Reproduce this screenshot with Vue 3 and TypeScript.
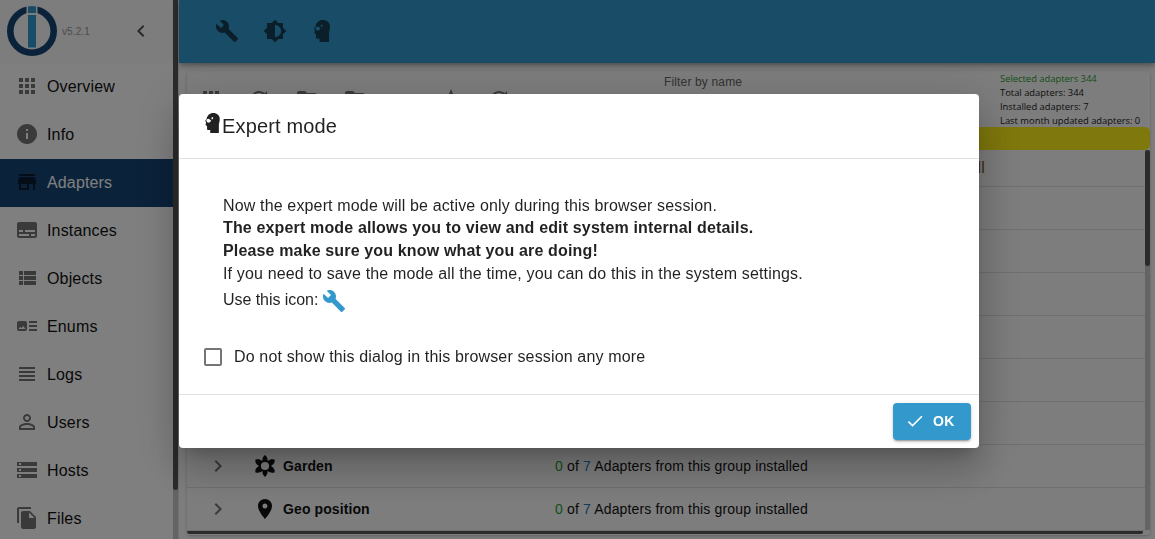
<script setup lang="ts">
interface MenuItem { label: string; icon: string }

const menu: MenuItem[] = [
  { label: 'Overview', icon: 'M4 8h4V4H4v4zm6 12h4v-4h-4v4zm-6 0h4v-4H4v4zm0-6h4v-4H4v4zm6 0h4v-4h-4v4zm6-10v4h4V4h-4zm-6 4h4V4h-4v4zm6 6h4v-4h-4v4zm0 6h4v-4h-4v4z' },
  { label: 'Info', icon: 'M12 2C6.48 2 2 6.48 2 12s4.48 10 10 10 10-4.48 10-10S17.52 2 12 2zm1 15h-2v-6h2v6zm0-8h-2V7h2v2z' },
  { label: 'Adapters', icon: 'M20 4H4v2h16V4zm1 10v-2l-1-5H4l-1 5v2h1v6h10v-6h4v6h2v-6h1zm-9 4H6v-4h6v4z' },
  { label: 'Instances', icon: 'M20 4H4c-1.1 0-2 .9-2 2v12c0 1.1.9 2 2 2h16c1.1 0 2-.9 2-2V6c0-1.1-.9-2-2-2zM4 12h4v2H4v-2zm10 6H4v-2h10v2zm6 0h-4v-2h4v2zm0-4H10v-2h10v2z' },
  { label: 'Objects', icon: 'M4 14h4v-4H4v4zm0 5h4v-4H4v4zM4 9h4V5H4v4zm5 5h12v-4H9v4zm0 5h12v-4H9v4zM9 5v4h12V5H9z' },
  { label: 'Enums', icon: 'M22 13h-8v-2h8v2zm0-6h-8v2h8V7zm-8 10h8v-2h-8v2zm-2-8v6c0 1.1-.9 2-2 2H4c-1.1 0-2-.9-2-2V9c0-1.1.9-2 2-2h6c1.1 0 2 .9 2 2zm-1.5 6l-2.25-3-1.75 2.26-1.25-1.51L3.5 15h7z' },
  { label: 'Logs', icon: 'M4 15h16v-2H4v2zm0 4h16v-2H4v2zm0-8h16V9H4v2zm0-6v2h16V5H4z' },
  { label: 'Users', icon: 'M12 5.9a2.1 2.1 0 1 1 0 4.2 2.1 2.1 0 0 1 0-4.2m0 9c2.97 0 6.1 1.46 6.1 2.1v1.1H5.9V17c0-.64 3.13-2.1 6.1-2.1M12 4C9.79 4 8 5.79 8 8s1.79 4 4 4 4-1.79 4-4-1.790-4-4-4zm0 9c-2.670 0-8 1.340-8 4v3h16v-3c0-2.660-5.330-4-8-4z' },
  { label: 'Hosts', icon: 'M2 20h20v-4H2v4zm2-3h2v2H4v-2zM2 4v4h20V4H2zm4 3H4V5h2v2zm-4 7h20v-4H2v4zm2-3h2v2H4v-2z' },
  { label: 'Files', icon: 'M16 1H4c-1.100 0-2 .9-2 2v14h2V3h12V1zm-1 4l6 6v10c0 1.100-.9 2-2 2H7.990C6.890 23 6 22.100 6 21l.01-14c0-1.100.89-2 1.990-2h7zm-1 7h5.500L14 6.500V12z' },
]

const wrench = 'M22.7 19l-9.100-9.100c.9-2.300.4-5-1.500-6.900-2-2-5-2.400-7.400-1.300L9 6 6 9 1.600 4.700C.4 7.100.9 10.100 2.900 12.100c1.900 1.900 4.600 2.400 6.900 1.500l9.100 9.100c.4.4 1 .4 1.400 0l2.300-2.300c.5-.4.5-1.100.1-1.400z'
const theme = 'M20 15.310L23.310 12 20 8.690V4h-4.690L12 .69 8.690 4H4v4.690L.69 12 4 15.310V20h4.690L12 23.310 15.310 20H20v-4.690zM12 18V6c3.310 0 6 2.690 6 6s-2.690 6-6 6z'
const head = 'M1.500 6.500C2.200 2.500 5 0 8.800 0 13 0 16 2.700 16 6.500c0 3-1 4.500-1 7V22H5.500v-3.300H3Q2 18.500 2 17.500v-3L.3 12.800 1 10.800 0 8.500zM1.800 7l-.6 1.500 1 1.600 1.800.6 1.800-1 .5-1.600L5 7.200 3.800 6.400zM6.800 5.200l1.300-.7.8 1-.9 1.300-1 .1z'
const folder = 'M10 4H4c-1.100 0-2 .9-2 2v12c0 1.100.9 2 2 2h16c1.100 0 2-.9 2-2V8c0-1.100-.9-2-2-2h-8l-2-2z'
const refresh = 'M17.650 6.350C16.200 4.900 14.210 4 12 4c-4.420 0-8 3.580-8 8s3.580 8 8 8c3.730 0 6.840-2.550 7.730-6h-2.080c-.82 2.330-3.040 4-5.650 4-3.310 0-6-2.690-6-6s2.690-6 6-6c1.660 0 3.140.69 4.220 1.780L13 11h7V4l-2.350 2.350z'
const tools: string[] = [
  menu[0].icon,
  refresh,
  folder,
  folder,
  'M4 9h16v2H4zm0 4h16v2H4z',
  'M22 9.240l-7.190-.62L12 2 9.190 8.630 2 9.240l5.460 4.730L5.820 21 12 17.270 18.180 21l-1.630-7.030z',
  refresh,
]

const hiddenRows = [1, 2, 3, 4, 5, 6]
const groups = [
  { name: 'Garden', icon: 'M12 1c1.600 1.300 2.600 3 2.700 5.900 2.200-1.700 4.200-2.100 6.800-1.400.7 2.600-.3 4.600-3.500 6.500 3.200 1.900 4.200 3.900 3.500 6.500-2.600.7-4.600.3-6.800-1.400-.1 2.900-1.100 4.600-2.700 5.900-1.600-1.300-2.600-3-2.700-5.900-2.200 1.700-4.200 2.100-6.800 1.400-.7-2.600.3-4.600 3.500-6.500-3.200-1.900-4.200-3.900-3.500-6.500 2.600-.7 4.600-.3 6.800 1.400.1-2.900 1.100-4.600 2.700-5.900zm0 6.900a4.100 4.100 0 1 0 0 8.200 4.100 4.100 0 0 0 0-8.200z' },
  { name: 'Geo position', icon: 'M12 2C8.130 2 5 5.130 5 9c0 5.250 7 13 7 13s7-7.750 7-13c0-3.870-3.130-7-7-7zm0 9.500a2.500 2.500 0 1 1 0-5 2.500 2.500 0 0 1 0 5z' },
]
</script>

<template>
  <div class="app">
    <aside class="side">
      <div class="side-body">
        <div class="brand">
          <svg class="logo" viewBox="0 0 50 50">
            <circle cx="25" cy="25" r="21.700" fill="#fafafa" stroke="#164477" stroke-width="6.600" />
            <path d="M19.500 0h11v10h-11z" fill="#fafafa" />
            <path d="M21 .5q4-1 8 0V7h-8zM21 9h8v32.500h-8z" fill="#3399cc" />
          </svg>
          <span class="version">v5.2.1</span>
          <svg class="collapse" viewBox="0 0 24 24"><path d="M15.410 7.410L14 6l-6 6 6 6 1.410-1.410L10.830 12z" /></svg>
        </div>
        <nav>
          <div v-for="item in menu" :key="item.label" class="nav-item" :class="{ active: item.label === 'Adapters' }">
            <svg viewBox="0 0 24 24"><path fill-rule="evenodd" :d="item.icon" /></svg>
            <span>{{ item.label }}</span>
          </div>
        </nav>
      </div>
      <div class="side-scroll"><div class="side-thumb"></div></div>
    </aside>

    <div class="main">
      <header class="bar">
        <svg viewBox="0 0 24 24"><path :d="wrench" /></svg>
        <svg viewBox="0 0 24 24"><path :d="theme" /></svg>
        <svg class="head" viewBox="0 0 16 22"><path fill-rule="evenodd" :d="head" /></svg>
      </header>
      <section class="paper">
        <div class="toolbar">
          <div class="tools">
            <svg v-for="(d, i) in tools" :key="i" viewBox="0 0 24 24"><path :d="d" /></svg>
          </div>
          <span class="filter">Filter by name</span>
          <div class="stats">
            <div class="green">Selected adapters 344</div>
            <div>Total adapters: 344</div>
            <div>Installed adapters: 7</div>
            <div>Last month updated adapters: 0</div>
          </div>
        </div>
        <div class="yellow"></div>
        <div class="table">
          <div class="rows">
            <div class="row first"><span>Install</span></div>
            <div v-for="n in hiddenRows" :key="n" class="row"></div>
            <div v-for="g in groups" :key="g.name" class="row">
              <svg class="chev" viewBox="0 0 24 24"><path d="M10 6L8.590 7.410 13.170 12l-4.580 4.590L10 18l6-6z" /></svg>
              <svg class="gicon" viewBox="0 0 24 24"><path fill-rule="evenodd" :d="g.icon" /></svg>
              <b>{{ g.name }}</b>
              <span class="count"><i class="green">0</i> of <i class="blue">7</i> Adapters from this group installed</span>
            </div>
          </div>
          <div class="v-scroll"><div class="v-thumb"></div></div>
        </div>
        <div class="h-scroll"><div class="h-thumb"></div></div>
      </section>
    </div>

    <div class="backdrop">
      <div class="dialog" role="dialog">
        <div class="title">
          <svg viewBox="0 0 16 22"><path fill-rule="evenodd" :d="head" /></svg>
          <span>Expert mode</span>
        </div>
        <div class="content">
          <div class="message">
            <div>Now the expert mode will be active only during this browser session.</div>
            <b>The expert mode allows you to view and edit system internal details.</b>
            <b>Please make sure you know what you are doing!</b>
            <div>If you need to save the mode all the time, you can do this in the system settings.</div>
            <div class="use"><span>Use this icon:</span><svg viewBox="0 0 24 24"><path :d="wrench" /></svg></div>
          </div>
          <label class="check"><span class="box"></span><span>Do not show this dialog in this browser session any more</span></label>
        </div>
        <div class="actions">
          <button type="button">
            <svg viewBox="0 0 24 24"><path d="M9 16.170L4.830 12l-1.420 1.410L9 19 21 7l-1.410-1.410z" /></svg>
            <span>OK</span>
          </button>
        </div>
      </div>
    </div>
  </div>
</template>

<style>
html, body { margin: 0; overflow: hidden; }
</style>

<style scoped>
* { box-sizing: border-box; }
.app { width: 1155px; height: 539px; display: flex; overflow: hidden; background: #fafafa; font: 16px/1.43 "Liberation Sans", Arial, sans-serif; letter-spacing: .15px; color: rgba(0,0,0,.87); }
svg { display: block; flex: none; fill: currentColor; }
.side { width: 179px; height: 539px; display: flex; flex: none; background: #fff; border-right: 1px solid #e0e0e0; overflow: hidden; }
.side-body { width: 173px; }
.side-scroll { width: 5px; background: #c8c8c8; }
.side-thumb { height: 490px; background: #575757; border-radius: 0 0 3px 3px; }
.brand { height: 63px; display: flex; align-items: center; padding: 0 0 1px 7px; background: #fafafa; }
.logo { width: 50px; height: 50px; }
.version { width: 67px; margin-left: 5px; padding-top: 3px; font-size: 10px; color: #999; letter-spacing: .1px; }
.collapse { width: 24px; height: 24px; color: #555; }
.nav-item { height: 48px; display: flex; align-items: center; padding-left: 15px; gap: 8px; color: #111; letter-spacing: .15px; }
.nav-item svg { width: 24px; height: 24px; margin-top: -2px; color: #757575; }
.nav-item.active { background: #164477; color: #fff; }
.nav-item.active svg { color: #0a1b30; }
.main { width: 976px; height: 539px; display: flex; flex-direction: column; }
.bar { position: relative; z-index: 1; height: 63px; flex: none; display: flex; align-items: center; padding: 0 0 1px 36px; gap: 24px; background: #3399cc; color: #143e52; box-shadow: 0 2px 4px -1px rgba(0,0,0,.2), 0 4px 5px rgba(0,0,0,.14), 0 1px 10px rgba(0,0,0,.12); }
.bar svg { width: 24px; height: 24px; }
.bar .head { width: 16px; height: 22px; margin-left: 3px; }
.paper { width: 963px; height: 464px; margin: 8px 0 0 8px; background: #fafafa; border-radius: 4px; overflow: hidden; box-shadow: 0 1px 3px rgba(0,0,0,.22); }
.toolbar { height: 56px; display: flex; }
.tools { width: 477px; padding: 16px 0 0 12px; display: flex; gap: 24px; color: #757575; }
.tools svg { width: 24px; height: 24px; }
.filter { width: 336px; padding-top: 3px; font-size: 12px; letter-spacing: .15px; color: #666; }
.stats { font: 9.4px/14px "Open Sans", "Noto Sans", sans-serif; letter-spacing: 0; white-space: nowrap; padding-top: 1px; color: #212121; }
.green { color: #2a9d34; }
.blue { color: #2179b5; }
.yellow { height: 23px; border-radius: 5px; background: #fff019; }
.table { height: 380px; display: flex; }
.rows { width: 958px; }
.row { height: 43px; display: flex; align-items: center; border-bottom: 1px solid #e0e0e0; padding-left: 19px; font-size: 14px; color: #111; }
.row.first { height: 37px; justify-content: flex-end; padding: 0 160px 0 0; font-size: 16px; color: #7a5420; }
.chev { width: 24px; height: 24px; color: #757575; }
.gicon { width: 24px; height: 24px; margin: 0 6px 0 23px; }
.row b { width: 272px; font-size: 14px; letter-spacing: .1px; }
.count i { font-style: normal; }
.v-scroll { width: 5px; height: 380px; background: #c8c8c8; }
.v-thumb { height: 116px; background: #575757; border-radius: 3px; }
.h-scroll { height: 5px; background: #fafafa; }
.h-thumb { width: 956px; height: 4px; background: #575757; border-radius: 3px; }
.backdrop { position: fixed; z-index: 5; inset: 0; background: rgba(0,0,0,.5); padding: 94px 0 0 179px; }
.dialog { width: 800px; height: 354px; background: #fff; border-radius: 4px; box-shadow: 0 11px 15px -7px rgba(0,0,0,.2), 0 24px 38px 3px rgba(0,0,0,.14), 0 9px 46px 8px rgba(0,0,0,.12); }
.title { height: 64px; display: flex; align-items: center; padding-left: 26px; font-size: 20px; }
.title svg { width: 15px; height: 20px; margin: -6px 2px 0 0; }
.content { height: 237px; border: solid #e0e0e0; border-width: 1px 0; padding: 35.500px 24px 0 25px; }
.message { padding-left: 19px; line-height: 22.88px; white-space: nowrap; }
.message b { display: block; }
.use { display: flex; align-items: center; gap: 4px; height: 29px; letter-spacing: -.05px; }
.use svg { width: 24px; height: 24px; color: #3399cc; margin-top: 1px; }
.check { display: flex; align-items: center; gap: 12px; margin-top: 30.500px; }
.box { width: 18px; height: 18px; border: 2px solid #757575; border-radius: 2px; }
.actions { display: flex; justify-content: flex-end; padding: 8px; }
button { width: 78px; height: 37px; border: 0; border-radius: 4px; display: flex; align-items: center; padding: 0 0 1px 12px; gap: 8px; background: #3399cc; color: #fff; font: bold 14px "Liberation Sans", Arial, sans-serif; letter-spacing: .4px; box-shadow: 0 3px 1px -2px rgba(0,0,0,.2), 0 2px 2px rgba(0,0,0,.14), 0 1px 5px rgba(0,0,0,.12); }
button svg { width: 20px; height: 20px; }
</style>
